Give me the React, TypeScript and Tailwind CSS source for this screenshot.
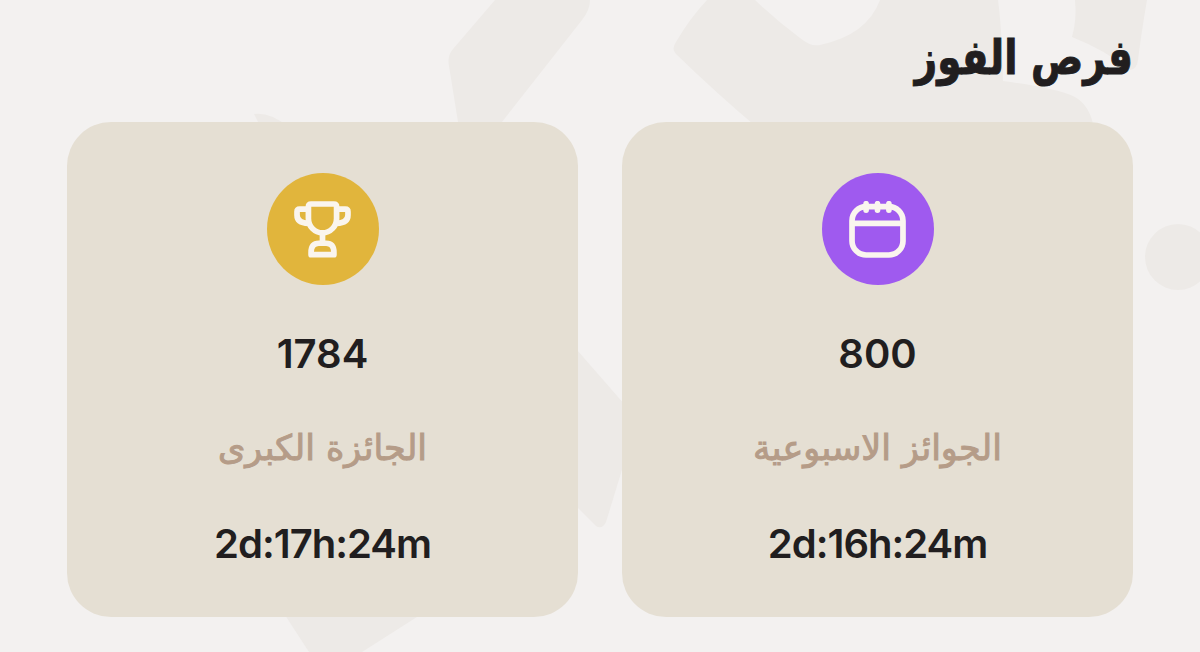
import type { ReactNode } from "react";

function TrophyIcon() {
  return (
    <svg viewBox="0 0 170 170" className="size-[57px]" fill="none" stroke="currentColor" strokeWidth="17" strokeLinejoin="round">
      <path d="M51 9H119Q127 9 127 17V52A42 43 0 0 1 43 52V17Q43 9 51 9Z" />
      <path d="M43 24H17Q9 24 9 32V42Q9 66 43 67" />
      <path d="M127 24H153Q161 24 161 32V42Q161 66 127 67" />
      <path d="M85 94V126" />
      <path d="M51 160V153Q51 126 74 126H96Q119 126 119 153V160Z" />
    </svg>
  );
}

function CalendarIcon() {
  return (
    <svg viewBox="0 0 170 170" className="size-[57px]" fill="none" stroke="currentColor" strokeWidth="17">
      <rect x="9" y="17" width="152" height="144" rx="42" />
      <path d="M9 67H161" />
      <path d="M51 8V27M85 8V27M119 8V27" strokeWidth="17" strokeLinecap="round" />
    </svg>
  );
}

function Backdrop() {
  return (
    <svg viewBox="0 0 1200 652" className="absolute inset-0 h-full w-full" fill="#edeae7" aria-hidden="true">
      <path d="M495 0H590Q590 10 582 20L502 122H458L449 66Q447 56 453 49Z" />
      <path d="M707 0H755Q777 21 800 38Q811 47 820 45Q867 35 880 0H998Q1002 30 1003 81Q1055 88 1073 96Q1091 105 1094 130H760Q715 92 676 54Q671 49 676 42Q690 18 707 0Z" />
      <path d="M1075 0H1147Q1141 35 1138 60Q1137 69 1130 70Q1105 50 1072 37Q1077 20 1075 0Z" />
      <path d="M254 114Q270 112 287 126H260Z" />
      <path d="M570 342L625 405V460L606 522Q602 530 596 526L570 500Z" />
      <path d="M285 615H420L362 652H309Z" />
      <circle cx="1178" cy="257" r="33" />
    </svg>
  );
}

interface PrizeCardProps {
  icon: ReactNode;
  iconBg: string;
  count: string;
  label: string;
  timeLeft: string;
}

function PrizeCard({ icon, iconBg, count, label, timeLeft }: PrizeCardProps) {
  return (
    <div className="flex h-[495px] flex-col items-center rounded-[44px] bg-[#e5dfd3] pt-[51px]">
      <div className={`flex size-28 items-center justify-center rounded-full text-[#faf5ee] ${iconBg}`}>
        {icon}
      </div>
      <p dir="ltr" className="mt-[45px] text-[40px] leading-12 font-semibold text-[#211e1f]">
        {count}
      </p>
      <p className="mt-[46px] text-[35px] leading-12 whitespace-nowrap text-[#b59c88] font-['DejaVu_Sans',sans-serif] [-webkit-text-stroke:1px_#b59c88]">
        {label}
      </p>
      <p dir="ltr" className="mt-12 text-[40px] leading-12 font-semibold tracking-[-1px] text-[#211e1f]">
        {timeLeft}
      </p>
    </div>
  );
}

export default function App() {
  return (
    <main dir="rtl" className="relative h-[652px] overflow-hidden bg-[#f3f1f0] px-[67px] pt-7 font-['Inter',sans-serif]">
      <Backdrop />
      <div className="relative">
        <h1 className="h-[94px] origin-right scale-x-81 text-[48px] leading-[58px] font-bold text-[#211e1f] font-['DejaVu_Sans',sans-serif] [-webkit-text-stroke:1px_#211e1f]">
          فرص الفوز
        </h1>

        {/* Prize cards */}
        <div className="grid grid-cols-2 gap-11">
          <PrizeCard
            icon={<CalendarIcon />}
            iconBg="bg-[#9f5aef]"
            count="800"
            label="الجوائز الاسبوعية"
            timeLeft="2d:16h:24m"
          />
          <PrizeCard
            icon={<TrophyIcon />}
            iconBg="bg-[#e1b53c]"
            count="1784"
            label="الجائزة الكبرى"
            timeLeft="2d:17h:24m"
          />
        </div>
      </div>
    </main>
  );
}
